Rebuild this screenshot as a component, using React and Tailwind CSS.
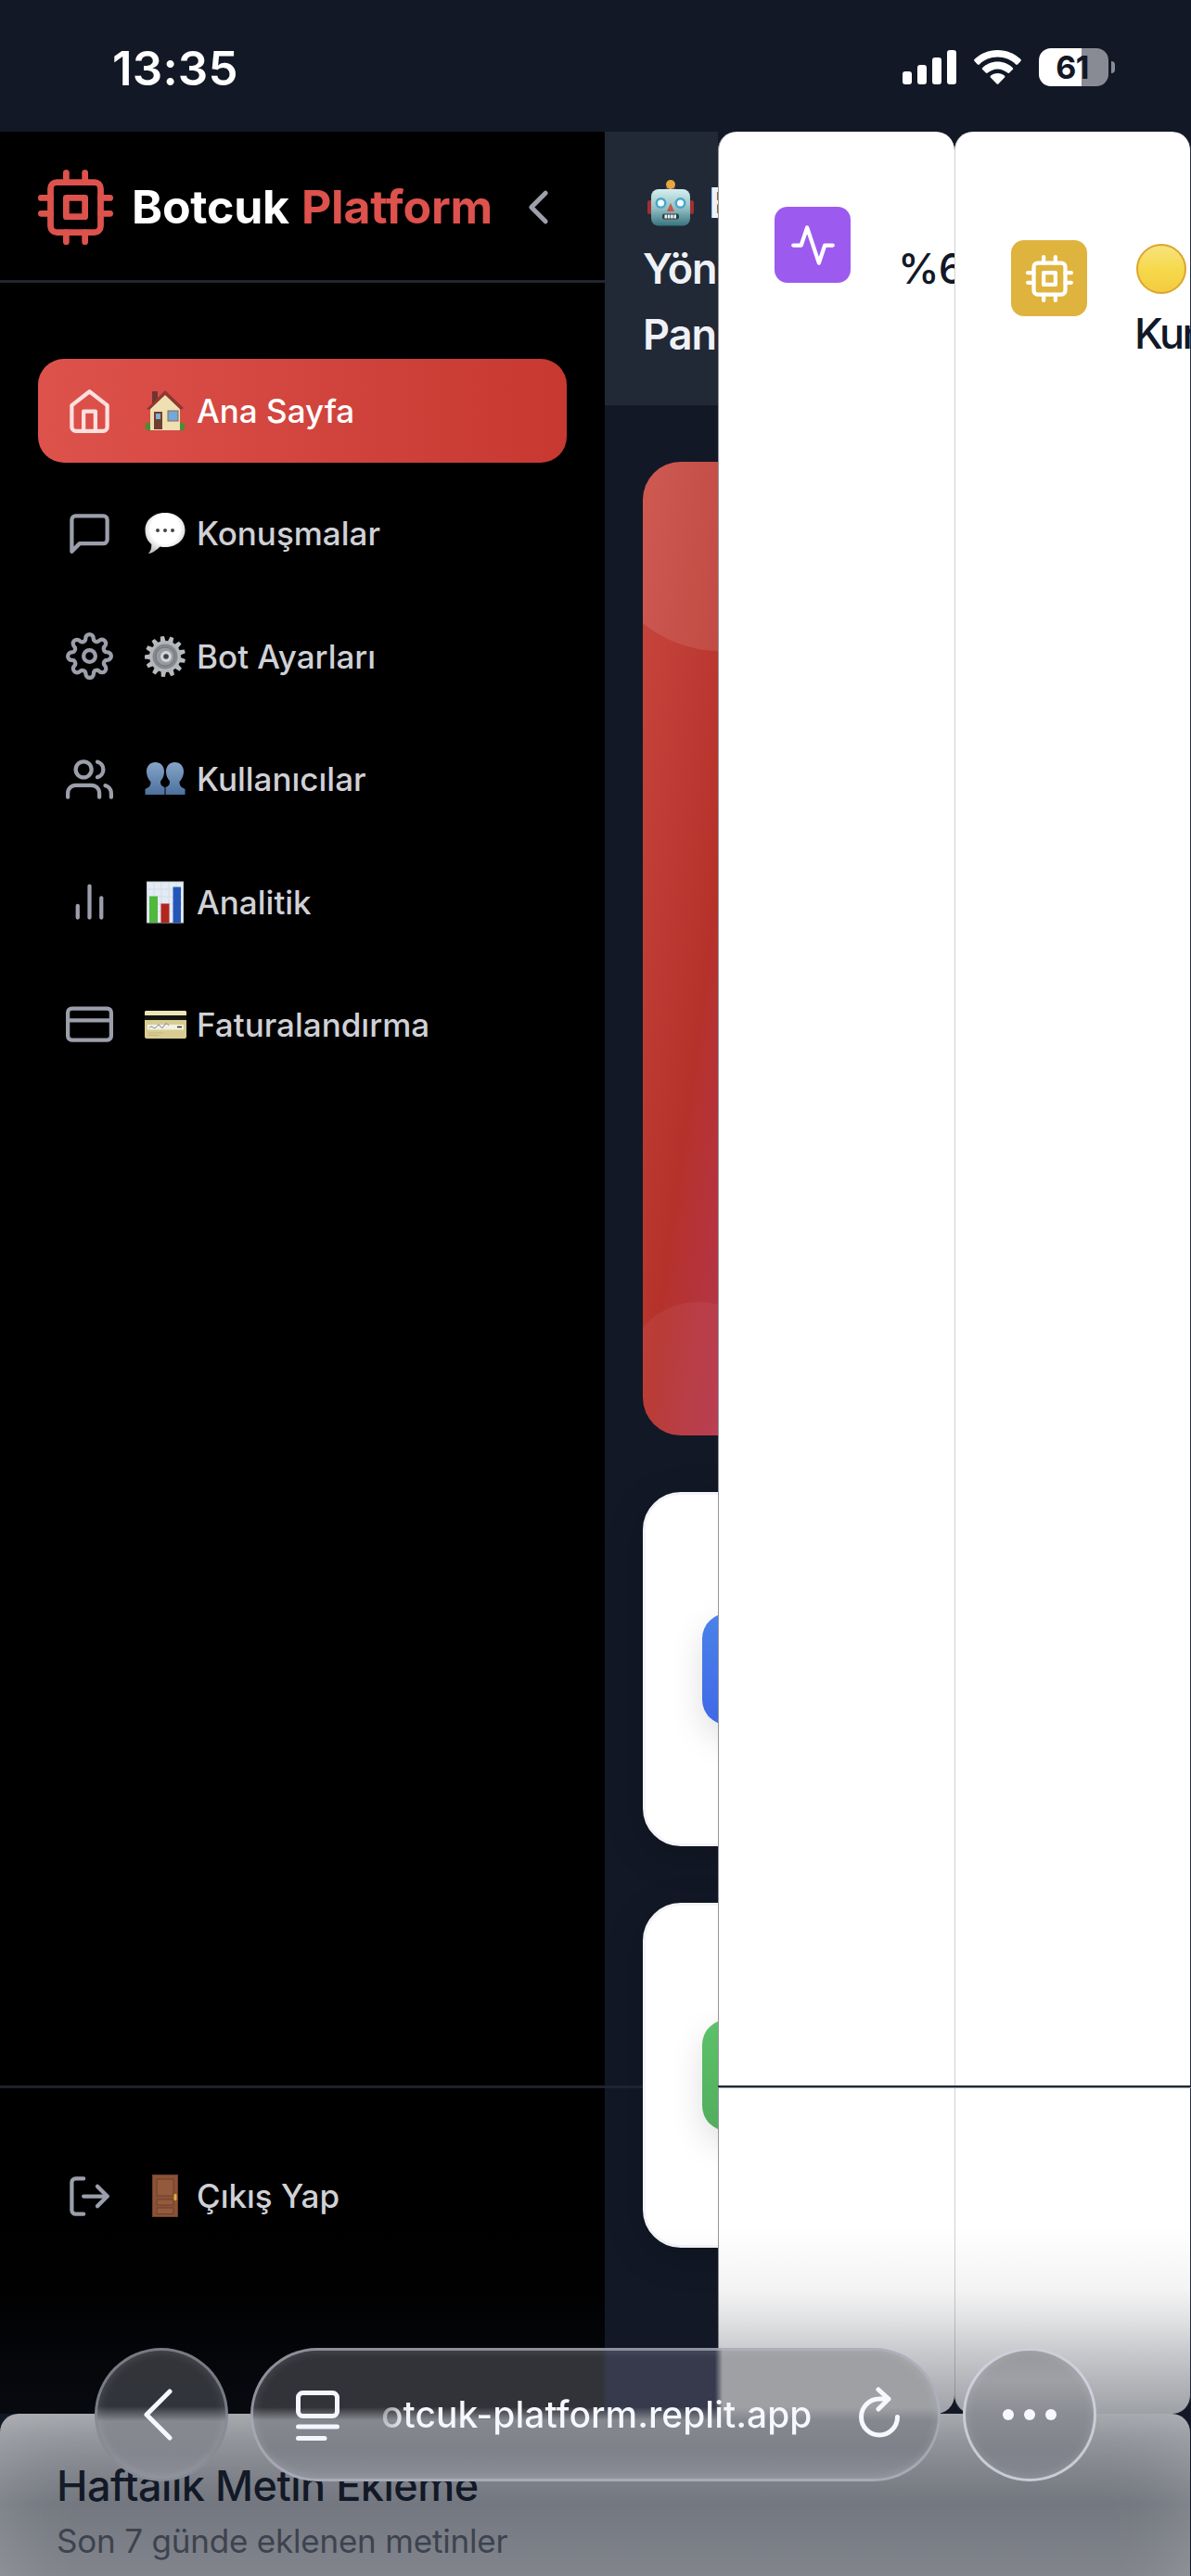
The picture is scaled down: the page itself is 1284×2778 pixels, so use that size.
import React from "react";
import {
  FiHome, FiMessageSquare, FiSettings, FiUsers, FiBarChart2, FiCreditCard,
  FiLogOut, FiCpu, FiActivity, FiChevronLeft,
} from "react-icons/fi";

function HouseEmoji() {
  return (
    <svg viewBox="0 0 44 46" className="h-[46px] w-[44px]">
      <ellipse cx="5" cy="40" rx="4.5" ry="4.5" fill="#4f8a34" />
      <ellipse cx="39" cy="40" rx="4.5" ry="4.5" fill="#4f8a34" />
      <rect x="8" y="2" width="6" height="14" fill="#6e3530" />
      <path d="M22 5 38 21V44H6V21Z" fill="#efe0b4" />
      <path d="M2 21 22 1 42 20 39 22 22 6 5 22Z" fill="#8e3830" />
      <rect x="10" y="24" width="9" height="19" fill="#6f4030" />
      <rect x="12" y="26" width="5" height="6" fill="#82aed6" />
      <rect x="25" y="23" width="11" height="11" fill="#74a7dc" stroke="#8a6a4a" />
    </svg>
  );
}

function SpeechEmoji() {
  return (
    <svg viewBox="0 0 44 46" className="h-[46px] w-[44px]">
      <defs>
        <radialGradient id="speech" cx="50%" cy="40%" r="60%">
          <stop offset="60%" stopColor="#ffffff" />
          <stop offset="100%" stopColor="#c4c4c4" />
        </radialGradient>
      </defs>
      <path d="M22 1C34 1 43.500 8.500 43.500 19.500S34 38 22 38c-2 0-4-.2-5.500-.6C13 41 8 44.500 4 45c2.500-3 3.500-6 3.300-10C3 31.500.5 26.500.5 19.500.5 8.500 10 1 22 1Z" fill="url(#speech)" />
      <circle cx="14" cy="20" r="2" fill="#444" />
      <circle cx="22" cy="20" r="2" fill="#444" />
      <circle cx="30" cy="20" r="2" fill="#444" />
    </svg>
  );
}

function GearEmoji() {
  const teeth = [0, 27.7, 55.4, 83.1, 110.8, 138.5, 166.2, 193.8, 221.5, 249.2, 276.9, 304.6, 332.3];
  return (
    <svg viewBox="0 0 44 46" className="h-[46px] w-[44px]">
      {teeth.map((a) => (
        <path key={a} d="M19 8 20 1h4l1 7Z" fill="#b9bbbd" transform={`rotate(${a - 8} 22 23)`} />
      ))}
      <circle cx="22" cy="23" r="17" fill="#b4b7ba" />
      <circle cx="22" cy="23" r="13.500" fill="#84888c" />
      <circle cx="22" cy="23" r="10" fill="#989ca0" stroke="#70757a" />
      <circle cx="23" cy="23" r="6" fill="#d2d4d6" />
      <circle cx="23" cy="23" r="2.800" fill="#3c4148" />
    </svg>
  );
}

function BustsEmoji() {
  const bust = "M11.500 5C17 5 21 9 21 15c0 5-2 8-4 10.500 0 4 1 5 4.500 6.500V40H.5V34c4-2 6-3 6-8C4.500 24 2 20 2 15 2 9 6 5 11.500 5Z";
  return (
    <svg viewBox="0 0 44 46" className="h-[46px] w-[44px]">
      <defs>
        <linearGradient id="bust" x2="0" y2="1">
          <stop offset="0" stopColor="#85a5c8" />
          <stop offset="1" stopColor="#4c719d" />
        </linearGradient>
      </defs>
      <path d={bust} fill="url(#bust)" />
      <path d={bust} fill="url(#bust)" transform="translate(44 0) scale(-1 1)" />
    </svg>
  );
}

function ChartEmoji() {
  return (
    <svg viewBox="0 0 44 46" className="h-[46px] w-[44px]">
      <rect x="2.500" y="1" width="39" height="44" fill="#e3ebf4" stroke="#c3cbd4" />
      <path d="M2 9h40M2 17h40M2 25h40M2 33h40M10 1v44M18 1v44M26 1v44M34 1v44" stroke="#cfd9e6" strokeWidth=".8" />
      <rect x="5" y="16.500" width="9" height="28.500" fill="#4eb93a" />
      <rect x="17.500" y="24.500" width="9" height="20.500" fill="#b3261e" />
      <rect x="30.500" y="6.500" width="8.500" height="38.500" fill="#2456b8" />
    </svg>
  );
}

function CardEmoji() {
  return (
    <svg viewBox="0 0 45 46" className="h-[46px] w-[45px]">
      <rect x="0" y="8" width="45" height="30" rx="2" fill="#d8cc92" />
      <rect x="0" y="8" width="45" height="5" rx="2" fill="#ece5b8" />
      <rect x="0" y="13" width="45" height="5" fill="#15150f" />
      <rect x="3" y="23" width="39" height="5.500" fill="#f4f1df" />
      <path d="M5 26.500q2-3 4-.5t4-1 4 0 4-1 5 0" stroke="#7a89bb" strokeWidth="1" fill="none" />
      <path d="M35 25.500h5" stroke="#333" strokeWidth="1.500" />
      <path d="M4 32h16M4 34.500h11" stroke="#c3b883" />
    </svg>
  );
}

function DoorEmoji() {
  return (
    <svg viewBox="0 0 44 46" className="h-[46px] w-[44px]">
      <rect x="8.500" y=".5" width="27" height="45" fill="#8a5237" stroke="#6f3f29" />
      <rect x="13" y="5" width="18" height="18" fill="#945a3d" stroke="#6f3f29" />
      <rect x="13" y="27" width="18" height="6" fill="#945a3d" stroke="#6f3f29" />
      <rect x="13" y="36" width="18" height="6.500" fill="#945a3d" stroke="#6f3f29" />
      <rect x="31.500" y="21" width="3" height="7" rx="1" fill="#d6b13c" />
    </svg>
  );
}

function RobotEmoji() {
  return (
    <svg viewBox="0 0 50 50" className="h-[50px] w-[50px] shrink-0">
      <defs>
        <linearGradient id="robot" x2="0" y2="1">
          <stop offset="0" stopColor="#d5efee" />
          <stop offset=".55" stopColor="#8dbcc0" />
          <stop offset="1" stopColor="#37747f" />
        </linearGradient>
      </defs>
      <rect x="0" y="22" width="5" height="15" rx="2.500" fill="#a02f35" />
      <rect x="45" y="22" width="5" height="15" rx="2.500" fill="#a02f35" />
      <ellipse cx="25" cy="10" rx="6" ry="3" fill="#5b3d78" />
      <circle cx="25" cy="5" r="5" fill="#e9a83a" />
      <rect x="4" y="10" width="42" height="39.500" rx="8" fill="url(#robot)" />
      <circle cx="14.500" cy="25" r="6" fill="#4aa7c6" />
      <circle cx="35.500" cy="25" r="6" fill="#4aa7c6" />
      <circle cx="14.500" cy="25" r="3.500" fill="#f2fbff" />
      <circle cx="35.500" cy="25" r="3.500" fill="#f2fbff" />
      <path d="M25 25 29 34H21Z" fill="#c9564b" />
      <rect x="16" y="36.500" width="18" height="6" rx="2" fill="#2c3f47" />
      <path d="M18.500 39.500h13" stroke="#f0f0f0" strokeWidth="4" strokeDasharray="2.600 .7" />
    </svg>
  );
}

const navItems = [
  { Icon: FiHome, Emoji: HouseEmoji, label: "Ana Sayfa", active: true },
  { Icon: FiMessageSquare, Emoji: SpeechEmoji, label: "Konuşmalar" },
  { Icon: FiSettings, Emoji: GearEmoji, label: "Bot Ayarları" },
  { Icon: FiUsers, Emoji: BustsEmoji, label: "Kullanıcılar" },
  { Icon: FiBarChart2, Emoji: ChartEmoji, label: "Analitik" },
  { Icon: FiCreditCard, Emoji: CardEmoji, label: "Faturalandırma" },
];

function NavItem({ Icon, Emoji, label, active }) {
  return (
    <div
      className={
        "flex h-[112px] items-center rounded-[28px] pl-[30px] " +
        (active ? "bg-linear-to-r from-[#de524c] to-[#c63830] text-white" : "text-[#d0d1d6]")
      }
    >
      <Icon className={"size-[51px] " + (active ? "text-[#fee0df]" : "text-[#9b9fab]")} />
      <div className="ml-[34px] flex w-[56px]"><Emoji /></div>
      <span className="mt-px whitespace-nowrap text-[35px] leading-none font-medium">{label}</span>
    </div>
  );
}

function StatusBar() {
  return (
    <div className="flex h-[142px] shrink-0 items-start justify-between pr-[82px] pl-[121px]">
      <span className="mt-[48px] text-[51px] leading-none font-semibold tracking-[0.2px] text-white">13:35</span>
      <div className="mt-[52px] flex items-start">
        <svg viewBox="0 0 58 38" className="mt-[2px] h-[38px] w-[58px]" fill="#fff">
          <rect x="0" y="23" width="10" height="14" rx="3" />
          <rect x="16" y="16" width="10" height="21" rx="3" />
          <rect x="32" y="8" width="10" height="29" rx="3" />
          <rect x="48" y="0" width="10" height="37" rx="3" />
        </svg>
        <svg viewBox="0 0 51 37" className="mt-[2px] ml-[19px] h-[37px] w-[51px]" fill="#fff">
          <path d="M25.500 0C35.500 0 44 3.800 50.300 9.800c.7.7.7 1.500.1 2.200l-3.300 3.400c-.6.600-1.400.600-2 0C40 10.600 33.300 7.600 25.500 7.600S11 10.600 5.900 15.400c-.6.600-1.400.600-2 0L.6 12c-.6-.7-.6-1.500.1-2.200C7 3.800 15.500 0 25.500 0Z" />
          <path d="M25.500 12.600c6.500 0 12 2.500 16.200 6.300.7.700.7 1.500 0 2.200l-3.500 3.500c-.6.600-1.300.600-2 0-3-2.600-6.600-4.200-10.700-4.200s-7.700 1.600-10.700 4.200c-.7.600-1.400.600-2 0l-3.500-3.500c-.7-.7-.7-1.500 0-2.200 4.200-3.800 9.700-6.300 16.200-6.300Z" />
          <path d="M25.500 25c3 0 5.500 1 7.300 2.500.8.700.8 1.500.1 2.200l-6.300 6.600c-.7.700-1.500.700-2.200 0l-6.300-6.600c-.7-.7-.7-1.500.1-2.200C20 26 22.500 25 25.500 25Z" />
        </svg>
        <div className="ml-[19px] flex h-[41px] w-[75px] items-center justify-center rounded-[13px] bg-linear-to-r from-white from-61% to-[#888b93] to-61%">
          <span className="mr-[3px] text-[34px] leading-none font-bold tracking-[-0.5px] text-[#121826]">61</span>
        </div>
        <div className="mt-[14px] ml-[3px] h-[13px] w-[4px] rounded-r-full bg-[#888b93]" />
      </div>
    </div>
  );
}

function Sidebar() {
  return (
    <aside className="flex w-[652px] shrink-0 flex-col bg-black">
      <div className="flex h-[163px] items-center border-b-[3px] border-[#20252e] pt-[2px] pl-[41px]">
        <FiCpu className="size-[81px] text-[#dd524c]" />
        <div className="ml-[20px] flex w-[408px] gap-[13px] text-[50px] leading-none font-bold tracking-[-0.2px] whitespace-nowrap">
          <span className="text-white">Botcuk</span>
          <span className="text-[#dd524c]">Platform</span>
        </div>
        <FiChevronLeft className="size-[61px] text-[#9ca0aa]" />
      </div>
      <nav className="flex flex-1 flex-col gap-[20.4px] px-[41px] pt-[82px]">
        {navItems.map((item) => <NavItem key={item.label} {...item} />)}
      </nav>
      <div className="h-[354px] border-t-[3px] border-[#1d222b] px-[41px] pt-[60px]">
        <NavItem Icon={FiLogOut} Emoji={DoorEmoji} label="Çıkış Yap" />
      </div>
    </aside>
  );
}

function StatCard({ className, tile }) {
  return (
    <div className={"ml-[41px] flex w-[145px] items-center rounded-[41px] border-[3px] border-[#f3f4f8] bg-white pl-[61px] shadow-[0_10px_40px_rgba(0,0,0,0.2)] " + className}>
      <div className={"h-[120px] w-[120px] shrink-0 rounded-[27px] shadow-[0_14px_36px_rgba(0,0,0,0.13)] " + tile} />
    </div>
  );
}

function MainColumn() {
  return (
    <main className="w-[122px] shrink-0 overflow-hidden">
      <header className="flex h-[295px] flex-col bg-[#212936] pt-[41px] pl-[41px] text-[45px] leading-[71px] font-semibold whitespace-nowrap text-[#eff1f6]">
        <div className="flex h-[71px] items-center gap-[16px] pl-[5px]">
          <RobotEmoji />
          <span>B</span>
        </div>
        <span className="tracking-[-1px]">Yön</span>
        <span className="tracking-[-1px]">Pan</span>
      </header>
      <div className="relative mt-[61px] ml-[41px] h-[1050px] w-[145px] overflow-hidden rounded-[41px] bg-linear-to-br from-[#c8473f] via-[#b5322b] to-[#b4365e]">
        <div className="absolute top-[-56px] left-[-47px] size-[260px] rounded-full bg-white/10" />
        <div className="absolute top-[906px] left-[-19px] size-[158px] rounded-full bg-white/5" />
      </div>
      <StatCard className="mt-[61px] h-[382px]" tile="bg-linear-to-b from-[#4b82ea] to-[#4068e6]" />
      <StatCard className="mt-[61px] h-[372px]" tile="bg-linear-to-b from-[#5dc269] to-[#52ad5e]" />
    </main>
  );
}

function Tile({ className, Icon }) {
  return (
    <div className={"flex size-[82px] shrink-0 items-center justify-center rounded-[14px] text-white " + className}>
      <Icon className="size-[51px]" />
    </div>
  );
}

function MetricCards() {
  const card = "flex items-start overflow-hidden rounded-[20px] bg-white pl-[60px] text-[45px] leading-[71px] font-medium whitespace-nowrap text-[#111827] ";
  return (
    <>
      <section className={card + "w-[255px] shrink-0 border-l border-[#94969b] pt-[81px]"}>
        <Tile className="bg-[#9d5aef]" Icon={FiActivity} />
        <span className="mt-[31px] ml-[51px] tracking-[-1px]">%6</span>
      </section>
      <section className={card + "w-[255px] shrink-0 border-x border-l-[#cfd0d4] border-r-[#2a2f3b] pt-[117px]"}>
        <Tile className="bg-[#dfb43e]" Icon={FiCpu} />
        <div className="-mt-[8px] ml-[51px]">
          <div className="flex h-[73px] items-center">
            <div className="mt-[4px] ml-[2px] size-[54px] rounded-full border-2 border-[#dba52f] bg-linear-to-b from-[#f8e27a] via-[#f6d94b] to-[#f4cb40]" />
          </div>
          <span className="block tracking-[-2.500px]">Kur</span>
        </div>
      </section>
    </>
  );
}

const glassEdge = "border-[3px] bg-origin-border shadow-[inset_0_0_12px_rgba(255,255,255,0.15)] ";

function BrowserBar() {
  return (
    <div className="absolute top-[2532px] left-[102px] flex h-[144px] gap-[24px]">
      <div className={glassEdge + "flex size-[144px] items-center justify-center rounded-full border-[#898c99]/80 bg-[linear-gradient(#333438_0,#31343b_63px,#86898f_79px,#83868e_113px,#8b8e96_100%)]"}>
        <svg viewBox="0 0 34 56" className="mr-[9px] h-[56px] w-[34px]" fill="none" stroke="#f7f8ff" strokeWidth="5" strokeLinecap="round" strokeLinejoin="round">
          <path d="M30 3 5 28 30 53" />
        </svg>
      </div>
      <div className={glassEdge + "flex w-[744px] items-center rounded-full border-[#b4b7c4]/70 bg-[linear-gradient(transparent_64px,#85888f_78px,#7e8189_110px,#8b8e96_142px),linear-gradient(90deg,#323338_379px,#363a4c_385px,#363a4c_501px,#9fa0a4_509px)] pl-[46px]"}>
        <svg viewBox="0 0 47 56" className="h-[56px] w-[47px]" fill="none" stroke="#f4f5ff" strokeWidth="5" strokeLinecap="round">
          <rect x="2.500" y="4.500" width="42" height="25" rx="5" />
          <path d="M2.500 41h42M2.500 53.500h28.500" />
        </svg>
        <span className="ml-[45px] w-[514px] whitespace-nowrap bg-linear-to-r from-white/40 via-[#f7f8ff] via-6% to-[#f7f8ff] bg-clip-text text-[39px] leading-[60px] font-medium text-transparent">
          otcuk-platform.replit.app
        </span>
        <svg viewBox="0 0 46 56" className="-mt-[4px] h-[56px] w-[46px]" fill="none" stroke="#f7f8ff" strokeWidth="5" strokeLinecap="round" strokeLinejoin="round">
          <path d="M42.500 32.500A19.500 19.500 0 1 1 23 13H33M22 3 33 13 22 24" />
        </svg>
      </div>
      <div className={glassEdge + "flex size-[144px] items-center justify-center gap-[11px] rounded-full border-[#dadde9]/80 bg-[linear-gradient(#97989c_0,#9fa0a5_35px,#8b8d94_72px,#80838b_110px,#83868e_100%)]"}>
        <i className="size-[12px] rounded-full bg-[#f7f8ff]" />
        <i className="size-[12px] rounded-full bg-[#f7f8ff]" />
        <i className="size-[12px] rounded-full bg-[#f7f8ff]" />
      </div>
    </div>
  );
}

export default function App() {
  return (
    <div className="relative flex h-[2778px] w-[1284px] flex-col overflow-hidden bg-[#121826] font-['Inter',sans-serif]">
      <StatusBar />
      <div className="flex h-[2461px] shrink-0">
        <Sidebar />
        <MainColumn />
        <MetricCards />
      </div>
      <div className="flex h-[175px] w-[1283px] shrink-0 flex-col rounded-t-[20px] bg-white pt-[50px] pl-[61px] whitespace-nowrap">
        <span className="text-[45px] leading-[56px] font-medium tracking-[-0.5px] text-[#111827]">Haftalık Metin Ekleme</span>
        <span className="mt-[6px] text-[35px] leading-[50px] tracking-[-0.2px] text-[#747783]">Son 7 günde eklenen metinler</span>
      </div>

      {/* Divider that runs past the sidebar over the neighbouring columns */}
      <div className="absolute top-[2249px] left-[652px] h-[3px] w-[41px] bg-[#1d2430]" />
      <div className="absolute top-[2249px] left-[774px] h-[3px] w-[510px] border-b border-[#969ba3] bg-[#222a37]" />

      {/* Toolbar scrim */}
      <div className="absolute top-[2400px] left-0 h-[378px] w-full bg-[linear-gradient(rgba(18,24,38,0)_0,rgba(18,24,38,0.05)_70px,rgba(18,24,38,0.12)_100px,rgba(18,24,38,0.22)_132px,rgba(18,24,38,0.31)_165px,rgba(18,24,38,0.4)_200px,rgba(18,24,38,0.48)_230px,rgba(18,24,38,0.59)_300px,rgba(18,24,38,0.53)_378px)]" />
      <div className="absolute top-[2603px] left-0 h-[260px] w-[1283px] rounded-[20px] shadow-[inset_0_0_90px_rgba(255,255,255,0.2)]" />
      <BrowserBar />
    </div>
  );
}
